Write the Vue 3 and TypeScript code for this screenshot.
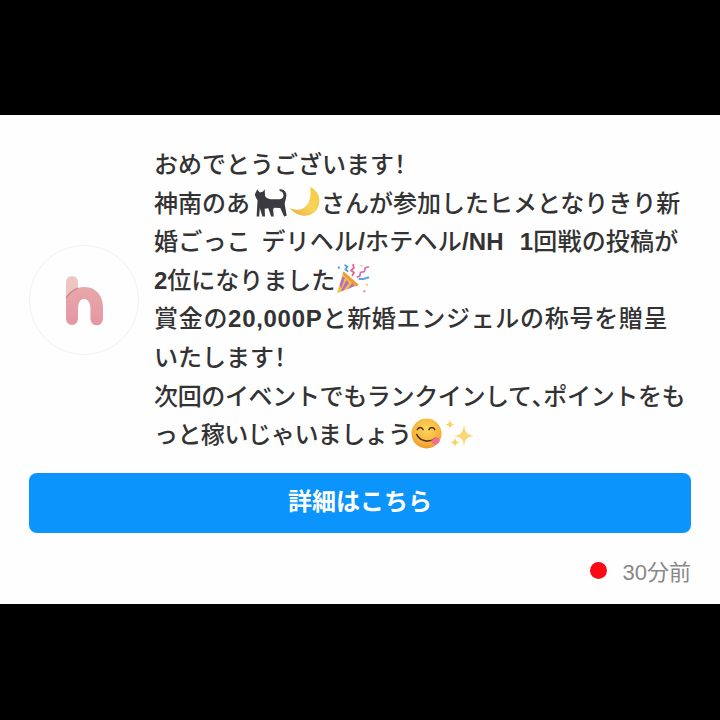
<template>
  <div class="screen">
    <section class="card">
      <div class="notice">
        <div class="avatar">
          <svg class="logo" viewBox="60 270 50 60" aria-hidden="true">
            <defs>
              <linearGradient id="logoFill" x1="0" y1="0" x2="0" y2="1">
                <stop offset="0" stop-color="#e6a7aa" />
                <stop offset="1" stop-color="#e597a2" />
              </linearGradient>
            </defs>
            <path d="M66 282a6 6 0 0 1 12 0v10H66z" fill="#eec6c1" />
            <path d="M66 290h12v8H66z" fill="#eec6c1" />
            <path
              d="M66 298c3-5 7-8 12-10 2-1 5-1 7-1 11 0 18 9 18 20v12a6.300 6.300 0 0 1-12.600 0v-11c0-5-2.400-9-6.400-9-4 0-6 4-6 10v10a6 6 0 0 1-12 0z"
              fill="url(#logoFill)"
            />
            <path d="M66 298c3-5 7-8 12-10" fill="none" stroke="#c08387" stroke-width="1.2" />
          </svg>
        </div>
        <p class="message">
          おめでとうございます<span class="narrow">！</span><br />
          神南のあ<svg class="emoji cat" viewBox="40 25 105 93" aria-hidden="true">
            <path
              fill="#3a3a40"
              d="M50 30l8 9 10-3 5-7 1 19c2 9 14 12 28 12h16c8 0 12-4 13-10 1-7-3-15-11-15l-2-6c14-2 23 8 22 20-1 12-6 20-5 28l6 34-8 2-12-26-18-1-4 4 2 23h-8l-9-25-11 1 1 24h-8l-8-26-2 26h-8l3-50c-5-7-8-13-8-19z"
            />
          </svg><svg class="emoji moon" viewBox="148 22 100 108" aria-hidden="true">
            <defs>
              <linearGradient id="moonFill" x1="1" y1="0" x2="0.2" y2="1">
                <stop offset="0" stop-color="#f6c83e" />
                <stop offset="0.6" stop-color="#f8d45c" />
                <stop offset="1" stop-color="#eeb044" />
              </linearGradient>
            </defs>
            <path fill="url(#moonFill)" d="M216 25c24 10 34 35 27 60-8 30-53 50-93 7 35 16 75-2 66-67z" />
          </svg>さんが参加したヒメとなりきり新<br />
          <span class="line-three">婚ごっこ デリヘル<b>/</b>ホテヘル<b class="nh">/NH 1</b>回戦の投稿が</span><br />
          <b>2</b>位になりました<svg class="emoji popper" viewBox="0 0 36 36" aria-hidden="true">
            <path fill="#f4c23f" d="M1 32L8 9l16 14z" />
            <path fill="#b96fc0" d="M4 23l3-9 2.500 2-4 11zM8 29l-3 1 6-12 3 3zM16 26l-4 2 5-7 3 3z" />
            <path fill="#ef9a3a" d="M8 9l16 14-3 2L7 12z" />
            <path fill="none" stroke="#3f9ae0" stroke-width="1.800" d="M9 2l3 2-2 3 3 2" />
            <path fill="none" stroke="#e2608f" stroke-width="1.800" d="M18 1l1 4-3 3 3 2-2 4" />
            <path fill="none" stroke="#d86fb0" stroke-width="1.800" d="M35 4l-4 1-1 4-4 1-1 4-3 1" />
            <path fill="none" stroke="#5aa7e2" stroke-width="2.200" d="M35 15l-6 2-5 0" />
            <circle cx="3" cy="5" r="1.200" fill="#3f9ae0" />
            <circle cx="30" cy="30" r="1.300" fill="#e2a0c0" />
            <circle cx="33" cy="23" r="1.100" fill="#f4c23f" />
            <circle cx="27" cy="3" r="1.100" fill="#f4c23f" />
          </svg><br />
          <span class="line-five">賞金の<b>20,000P</b>と新婚エンジェルの称号を贈呈</span><br />
          いたします<span class="narrow">！</span><br />
          <span class="line-six">次回のイベントでもランクインして<span class="narrow">、</span>ポイントをも</span><br />
          <span class="line-eight">っと稼いじゃいましょう</span><svg class="emoji yum" viewBox="0 0 32 32" aria-hidden="true">
            <defs>
              <radialGradient id="yumFill" cx="0.5" cy="0.35" r="0.7">
                <stop offset="0" stop-color="#fbd75c" />
                <stop offset="0.7" stop-color="#f7b03a" />
                <stop offset="1" stop-color="#ee8a25" />
              </radialGradient>
            </defs>
            <circle cx="16" cy="16" r="15.500" fill="url(#yumFill)" />
            <path
              fill="none"
              stroke="#4a2f17"
              stroke-width="1.600"
              stroke-linecap="round"
              d="M6.500 12c1-3 5-3 6 0M18.500 12c1-3 5-3 6 0M6 17c3 7 13 9 19 4"
            />
            <path fill="#ef6f8d" d="M21 23l4-3c3-1 6 2 4 5-2 3-6 3-7 1z" />
          </svg><svg class="emoji sparkles" viewBox="0 0 32 32" aria-hidden="true">
            <path fill="#f9d777" d="M19 7c1 7 3 10 10 11-7 1-9 3-10 10-1-7-3-9-10-10 7-1 9-4 10-11z" />
            <path fill="#f8d26c" d="M5 1c.500 3.500 1.500 5 5 5.500-3.500.500-4.500 1.500-5 5-.500-3.500-1.500-4.500-5-5 3.500-.500 4.500-2 5-5.500z" />
            <path fill="#f8d26c" d="M10 19c.500 3.500 1.500 5 5 5.500-3.500.500-4.500 1.500-5 5-.500-3.500-1.500-4.500-5-5 3.500-.500 4.500-2 5-5.500z" />
          </svg>
        </p>
      </div>
      <button class="detail" type="button">詳細はこちら</button>
      <footer class="meta">
        <span class="dot"></span>
        <span class="time">30分前</span>
      </footer>
    </section>
  </div>
</template>

<script setup lang="ts">
</script>

<style>
html,
body {
  background: #000;
}
</style>

<style scoped>
.screen {
  height: 720px;
  box-sizing: border-box;
  padding-bottom: 1px;
  background: #000;
  display: flex;
  align-items: center;
}

.card {
  width: 100%;
  box-sizing: border-box;
  height: 489px;
  background: #fefefe;
  padding: 29px 29px 0;
  font-family: "Noto Sans CJK JP", "Noto Sans", sans-serif;
}

.notice {
  display: flex;
  align-items: center;
  gap: 15px;
}

.avatar {
  flex: none;
  width: 110px;
  height: 110px;
  margin-top: 3px;
  box-sizing: border-box;
  border: 1px solid #f2f0f5;
  border-radius: 50%;
  display: flex;
  align-items: center;
  justify-content: center;
}

.logo {
  width: 50px;
  height: 60px;
  margin-left: 1px;
}

.message {
  margin: 0;
  flex: 1;
  height: 309px;
  white-space: nowrap;
  font-size: 24px;
  line-height: 38.6px;
  font-weight: 500;
  color: #333;
}

.message b {
  font-family: "Liberation Sans", sans-serif;
  font-weight: 700;
  line-height: 1;
}

.message .nh {
  word-spacing: 9px;
}

.narrow {
  font-feature-settings: "palt";
}

.line-three {
  word-spacing: 5px;
  letter-spacing: 0.2px;
}

.line-five {
  letter-spacing: 0.7px;
}

.line-six {
  letter-spacing: -0.35px;
}

.line-eight {
  letter-spacing: -0.6px;
}

.emoji {
  display: inline-block;
  height: 34px;
  vertical-align: -8px;
}

.cat {
  width: 34px;
  margin-left: 4px;
}

.moon {
  width: 33px;
}

.popper {
  width: 34px;
  margin-left: 1px;
}

.yum {
  width: 31px;
  height: 31px;
  vertical-align: -6px;
}

.sparkles {
  width: 32px;
  margin-left: 3px;
}

.detail {
  display: block;
  width: 100%;
  height: 60px;
  box-sizing: border-box;
  margin-top: 20px;
  padding: 0 0 7px;
  border: 0;
  border-radius: 8px;
  background: #0b94fb;
  color: #fff;
  font: 700 24px "Noto Sans CJK JP", "Noto Sans", sans-serif;
}

.meta {
  display: flex;
  align-items: center;
  justify-content: flex-end;
  gap: 16px;
  height: 30px;
  margin-top: 22px;
}

.dot {
  width: 17px;
  height: 17px;
  border-radius: 50%;
  background: #f90b15;
}

.time {
  font-family: "Liberation Sans", "Noto Sans CJK JP", sans-serif;
  font-size: 22px;
  color: #888;
}
</style>
